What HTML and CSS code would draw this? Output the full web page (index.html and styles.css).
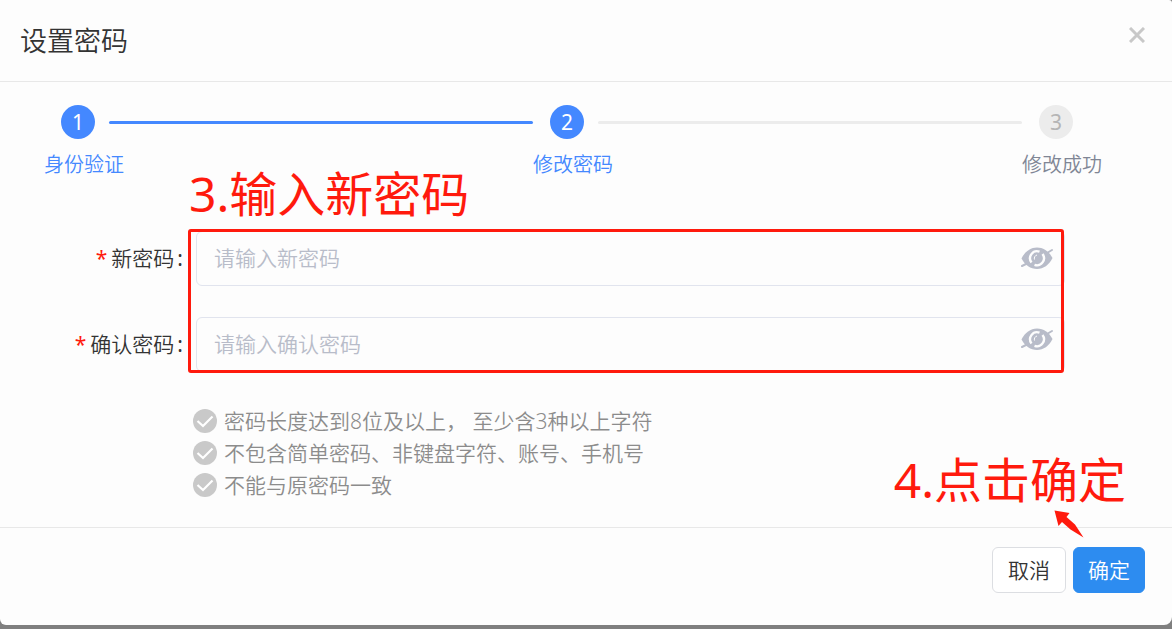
FILE: index.html
```html
<!DOCTYPE html>
<html lang="zh-CN">
<head>
  <meta charset="UTF-8">
  <title>设置密码</title>
  <link rel="stylesheet" href="styles.css">
</head>
<body>
  <svg class="defs" aria-hidden="true">
    <symbol id="eye-off" viewBox="0 0 32 24">
      <path d="M1 20L7 17M26 7L31 4" stroke="#b8bcc9" stroke-width="2" stroke-linecap="round"/>
      <path d="M0.500 12.500C4 5.500 9.500 1.500 16 1.500S28 5.500 31.500 12C28 19 22.500 23 16 23S4 19 0.500 12.500z" fill="#b8bcc9"/>
      <path d="M10.500 16.500A7 7 0 0 1 18.500 5.700M21.500 8A7 7 0 0 1 13.500 18.800" fill="none" stroke="#fdfdfd" stroke-width="2.400"/>
      <path d="M13.500 13.500A3.500 3.500 0 0 1 16 9" fill="none" stroke="#fdfdfd" stroke-width="1"/>
    </symbol>
    <symbol id="check" viewBox="0 0 24 24">
      <circle cx="12" cy="12" r="12" fill="#c9c9c9"/>
      <path d="M4.500 12L10 17L19.500 7.500" fill="none" stroke="#fff" stroke-width="2.200"/>
    </symbol>
  </svg>

  <div class="dialog" role="dialog" aria-labelledby="title">
    <div class="dialog-header">
      <h2 id="title">设置密码</h2>
      <button type="button" class="close" aria-label="关闭">
        <svg width="16" height="16" viewBox="0 0 16 16"><path d="M1 1L15 15M15 1L1 15" stroke="#c8c8c8" stroke-width="3"/></svg>
      </button>
    </div>

    <form class="dialog-body" id="pwd-form">
      <ol class="steps">
        <li class="step done">
          <div class="step-head"><span class="num">1</span><span class="line"></span></div>
          <div class="step-title">身份验证</div>
        </li>
        <li class="step active">
          <div class="step-head"><span class="num">2</span><span class="line"></span></div>
          <div class="step-title">修改密码</div>
        </li>
        <li class="step">
          <div class="step-head"><span class="num">3</span></div>
          <div class="step-title">修改成功</div>
        </li>
      </ol>

      <div class="fields">
        <div class="mark-box"></div>
        <div class="note note-input">3.输入新密码</div>
        <div class="field">
          <label for="pwd"><span class="required">*</span>新密码<span class="colon">:</span></label>
          <div class="input-wrap">
            <input type="password" id="pwd" placeholder="请输入新密码">
            <button type="button" class="eye" aria-label="显示密码"><svg width="32" height="24"><use href="#eye-off"/></svg></button>
          </div>
        </div>
        <div class="field">
          <label for="pwd2"><span class="required">*</span>确认密码<span class="colon">:</span></label>
          <div class="input-wrap">
            <input type="password" id="pwd2" placeholder="请输入确认密码">
            <button type="button" class="eye eye-high" aria-label="显示密码"><svg width="32" height="24"><use href="#eye-off"/></svg></button>
          </div>
        </div>
      </div>

      <ul class="rules">
        <li><svg width="24" height="24"><use href="#check"/></svg>密码长度达到8位及以上， 至少含3种以上字符</li>
        <li><svg width="24" height="24"><use href="#check"/></svg>不包含简单密码、非键盘字符、账号、手机号</li>
        <li><svg width="24" height="24"><use href="#check"/></svg>不能与原密码一致</li>
      </ul>
    </form>

    <div class="dialog-footer">
      <div class="note note-ok">4.点击确定</div>
      <svg class="arrow" width="30" height="28" viewBox="0 0 30 28"><path d="M0.500 0.500L15.500 3L12.500 7L21 14.500L29.500 27.500L16.500 19.500L8 12L4.500 16z" fill="#ff1a0d"/></svg>
      <button type="button" class="btn">取消</button>
      <button type="submit" form="pwd-form" class="btn btn-primary">确定</button>
    </div>
  </div>
</body>
</html>
```

FILE: styles.css
```css
* {
  box-sizing: border-box;
}
body {
  margin: 0;
  min-height: 100vh;
  background: #7f7f7f;
  font-family: "Noto Sans", "Noto Sans CJK SC", sans-serif;
  font-size: 21px;
  font-weight: 350;
  color: #333;
}
button, input {
  font: inherit;
}
.defs {
  display: none;
}
.dialog {
  background: #fdfdfd;
  border-radius: 0 3px 8px 6px;
}
.dialog-header {
  display: flex;
  justify-content: space-between;
  align-items: flex-start;
  padding: 21px 27px 20px 20px;
  border-bottom: 1px solid #e8e8e8;
}
.dialog-header h2 {
  margin: 0;
  font-size: 27px;
  line-height: 40px;
  font-weight: 350;
}
.close {
  display: flex;
  margin-top: 6px;
  padding: 0;
  border: 0;
  background: none;
}

/* steps */
.steps {
  display: flex;
  margin: 0;
  padding: 23px 70px 0 44px;
  list-style: none;
}
.step {
  flex: 1;
  color: #808695;
}
.step:last-child {
  flex: none;
}
.step-head {
  display: flex;
  align-items: center;
  gap: 14px;
  padding-left: 17px;
}
.num {
  width: 34px;
  height: 34px;
  border-radius: 50%;
  background: #ececec;
  color: #b5b5b5;
  line-height: 34px;
  font-weight: 400;
  text-align: center;
}
.line {
  flex: 1;
  height: 3px;
  border-radius: 2px;
  background: #ececec;
}
.step-title {
  font-size: 20px;
  line-height: 28px;
  margin-top: 12px;
}
.done, .active {
  color: #4488ff;
}
.done .num, .active .num {
  background: #4488ff;
  color: #fff;
}
.done .line {
  background: #4488ff;
}

/* form */
.fields {
  position: relative;
  display: grid;
  gap: 31px;
  margin-top: 52px;
  padding-right: 107px;
}
.field {
  display: grid;
  grid-template-columns: 183px 1fr;
  gap: 13px;
  align-items: center;
}
.field label {
  padding-bottom: 4px;
  text-align: right;
}
.required {
  color: #ff1a0d;
  margin-right: 4px;
  font-weight: 400;
}
.colon {
  margin-left: 3px;
  font-weight: 400;
}
.input-wrap {
  position: relative;
}
.input-wrap input {
  display: block;
  width: 100%;
  height: 55px;
  padding: 0 60px 1px 17px;
  border: 1px solid #e1e4ee;
  border-radius: 6px;
  background: #fdfdfd;
}
.input-wrap input::placeholder {
  color: #b8bcc9;
}
.eye {
  position: absolute;
  right: 12px;
  top: 15px;
  display: flex;
  padding: 0;
  border: 0;
  background: none;
}
.eye-high {
  top: 10px;
}

.rules {
  margin: 0;
  padding: 33px 0 26px 193px;
  list-style: none;
  color: #8c8c8c;
}
.rules li {
  display: flex;
  align-items: center;
  gap: 7px;
  line-height: 32px;
}

.dialog-footer {
  position: relative;
  display: flex;
  justify-content: flex-end;
  align-items: center;
  gap: 7px;
  padding: 19px 27px 32px;
  border-top: 1px solid #e8e8e8;
}
.btn {
  height: 46px;
  padding: 0 15px 2px;
  border: 1px solid #dcdee2;
  border-radius: 6px;
  background: #fff;
  color: #333;
}
.btn-primary {
  padding: 0 14px 2px;
  border-color: #2d8cf0;
  background: #2d8cf0;
  color: #fff;
}

/* red marks over the dialog */
.mark-box {
  position: absolute;
  z-index: 1;
  inset: -2px 108px -1px 188px;
  border: 3px solid #ff1a0d;
  border-radius: 3px;
  pointer-events: none;
}
.note {
  position: absolute;
  color: #ff1a0d;
  font-size: 48px;
  line-height: 60px;
  font-weight: 400;
  white-space: nowrap;
}
.note-input {
  left: 189px;
  bottom: 100%;
  margin-bottom: 7px;
}
.note-ok {
  right: 46px;
  bottom: 100%;
  margin-bottom: 18px;
}
.arrow {
  position: absolute;
  right: 88px;
  top: -18px;
}
```
